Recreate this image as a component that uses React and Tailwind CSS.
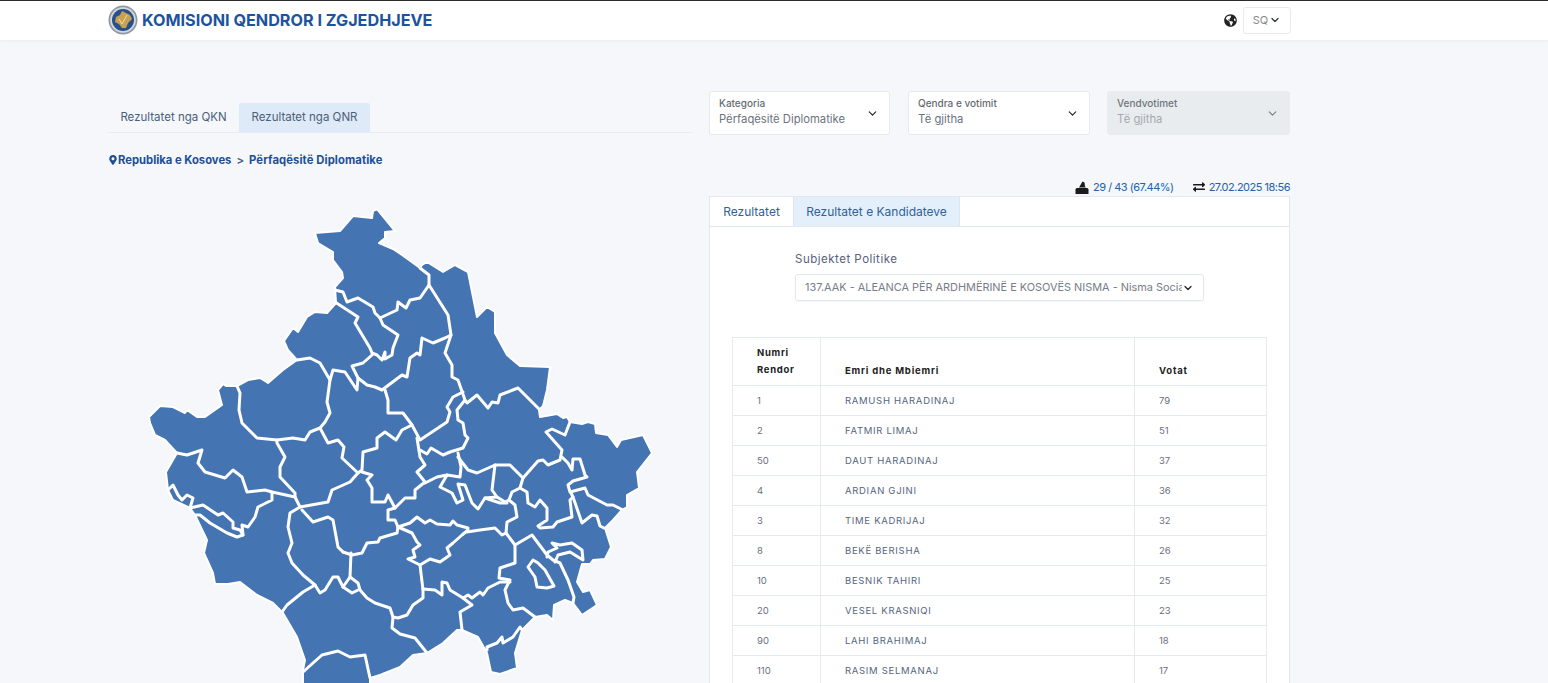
import React from "react";
import { ChevronDown } from "lucide-react";
import { FaMapMarkerAlt, FaGlobeAmericas, FaExchangeAlt } from "react-icons/fa";

const rows = [
  ["1", "RAMUSH HARADINAJ", "79"],
  ["2", "FATMIR LIMAJ", "51"],
  ["50", "DAUT HARADINAJ", "37"],
  ["4", "ARDIAN GJINI", "36"],
  ["3", "TIME KADRIJAJ", "32"],
  ["8", "BEKË BERISHA", "26"],
  ["10", "BESNIK TAHIRI", "25"],
  ["20", "VESEL KRASNIQI", "23"],
  ["90", "LAHI BRAHIMAJ", "18"],
  ["110", "RASIM SELMANAJ", "17"],
];

const outline =
  "315,233 340,231 353,216 372,218 373,211 377,209 395,231 385,232 385,238 379,243 393,249 402,255 420,268 422,265 427,262 443,272 455,265 468,272 477,317 487,307 495,312 495,333 507,355 520,366 550,367 547,390 543,406 539,410 540,417 557,414 563,418 567,417 570,422 582,424 588,422 595,424 596,433 608,435 617,447 621,440 643,435 652,453 637,472 639,488 627,495 627,507 622,510 613,520 605,528 611,547 605,559 593,560 590,564 582,564 577,582 583,592 590,590 597,605 582,615 573,603 565,600 554,605 553,620 547,615 535,617 522,630 515,653 517,668 500,674 491,672 487,653 478,637 462,630 457,630 443,643 427,653 413,655 400,667 380,675 370,678 370,700 303,700 303,670 305,660 297,637 283,613 273,603 257,595 240,582 228,584 215,584 213,573 204,553 207,540 195,515 190,508 173,500 168,490 166,472 177,453 165,440 155,435 150,423 149,417 160,406 173,407 185,413 187,410 197,417 205,417 222,405 218,390 223,384 226,386 237,386 248,380 260,378 268,383 283,370 297,360 288,350 284,341 293,328 298,332 307,317 315,312 327,313 336,303 335,287 343,278 342,272 333,260 333,252 318,243";

const borders = [
  "335,290 343,292 347,302 358,298 373,307 375,313 380,318 397,310 398,302 406,308 410,300 420,298 429,285 429,275 420,268",
  "429,285 448,315 451,335 445,353 452,365 452,377 458,380 465,400 467,403 477,395 488,408 492,402 498,403 500,395 518,388 539,409",
  "380,318 383,325 398,335 393,348 392,355 385,359 385,352 382,360 377,355 372,353 370,348 355,323 358,317 335,302",
  "372,355 363,363 352,366 358,378 357,390 345,372 333,370 330,380 320,363 310,358 297,360",
  "358,378 367,385 375,387 382,390 402,375 407,377 410,358 417,353 420,355 422,338 433,343 445,338 451,335",
  "385,390 388,400 388,413 403,413 412,425 420,440 447,422 450,412 447,407 453,397 463,392",
  "465,400 457,410 458,420 463,423 465,435 468,438 463,448 450,452 443,455 431,448 427,454 420,450",
  "330,380 327,402 330,413 325,422 320,428 310,432 305,440 293,438 277,440 257,438 242,423 239,410 240,393 237,386",
  "320,428 328,443 338,440 344,447 342,458 358,473 362,470 363,452 377,448 377,438 385,432 396,440 402,430 412,425",
  "362,472 372,475 367,480 372,488 372,502 385,502 388,495 395,508 405,498 415,498 415,490 425,482 417,472 425,465 420,457 417,438",
  "425,483 437,477 447,475 460,477 461,467 458,453",
  "358,473 350,482 332,490 328,502 300,507 295,497 295,493 280,477 280,467 285,457 277,443 277,440",
  "458,457 468,470 477,473 495,465 510,465 517,472 523,478 538,461 543,460 548,465 560,460 562,450 546,432 552,429 565,435 570,422",
  "562,457 568,463 572,470 573,459 580,459 585,475 587,477 573,481 568,485 570,492 585,488 588,495 607,505 613,505 623,510",
  "571,493 573,497 582,523 592,515 597,516 600,526 604,528",
  "573,497 570,500 572,517 557,522 553,527 540,528 538,526 547,520 547,508 540,500 535,507 528,503 527,492 520,488 523,478",
  "520,488 512,492 509,500 515,505 517,517 507,522 506,533 515,545 532,535 547,555 553,560 560,563 568,580 574,597 573,603",
  "495,465 492,490 497,497 505,502 509,500",
  "497,497 485,498 478,509 472,503 465,485 458,484 463,500 457,503 452,493 440,487 447,475",
  "485,498 500,503 507,503",
  "395,508 388,510 388,520 395,520 398,527 397,533 380,538 378,542 367,543 362,553 352,555 343,552",
  "398,527 410,523 417,517 425,523 430,520 437,524 450,525 453,521 457,525 468,528 467,532 480,530 495,528 502,535 506,533",
  "398,527 412,533 417,542 420,545 413,550 415,557 408,559 420,565 430,559 440,562 450,555 447,548 453,543 462,535 468,530",
  "420,565 423,590 423,598 413,605 407,615 398,618 393,617 390,608 375,603 367,598 360,590 358,583 350,577 343,587 352,593 358,590",
  "423,589 435,590 442,595 442,582 447,583 450,590 463,598 468,595 472,598 480,592 483,595 488,588 500,582 510,582",
  "463,598 472,605 460,612 462,630",
  "515,545 515,563 500,568 499,578 510,580 505,590 508,603 513,610 523,608 535,617",
  "547,557 548,552 557,548 552,543 560,545 572,543 582,550 583,560 570,552 558,555 555,562",
  "487,650 487,647 497,643 502,637 503,643 513,637 520,627 522,630",
  "393,617 392,628 400,634 415,638 427,653",
  "350,577 351,553",
  "300,507 290,513 288,527 292,543 288,553 292,563 303,575 315,585 303,592 287,605 282,612",
  "302,510 313,522 328,517 333,520 338,547 343,552",
  "315,585 320,593 325,590 333,577 338,577 343,587",
  "177,453 187,455 202,450 198,463 205,472 225,478 233,470 242,477 247,492 265,490 272,492 295,497",
  "272,492 272,500 258,507 255,517 248,527 242,525 243,535 237,537 227,533 210,523 200,515 195,515",
  "168,490 173,485 178,495 182,500 187,495 193,498 190,508 203,505 218,515 223,513 233,522 233,528 240,530 243,535",
  "303,672 313,663 322,655 338,651 350,657 365,655 370,678",
];

function KosovoMap() {
  return (
    <svg viewBox="108 200 584 490" className="block w-[584px] h-[490px]">
      <polygon points={outline} fill="#4474b2" stroke="#ffffff" strokeWidth="2" strokeLinejoin="round" />
      {borders.map((b, i) => (
        <polyline key={i} points={b} fill="none" stroke="#ffffff" strokeWidth="3" strokeLinejoin="round" strokeLinecap="round" />
      ))}
      <polygon points="533,560 528,567 535,577 537,587 547,588 554,586 545,570 538,563" fill="#4474b2" stroke="#ffffff" strokeWidth="3" strokeLinejoin="round" />
    </svg>
  );
}

function Logo() {
  return (
    <svg viewBox="0 0 30 30" className="w-[30px] h-[30px] shrink-0">
      <circle cx="15" cy="15" r="14.5" fill="#8f98a3" />
      <circle cx="15" cy="15" r="12.8" fill="#d5d9de" />
      <circle cx="15" cy="15" r="11" fill="#27508c" />
      <path d="M14 6 L18 8 L22 10 L24 14 L20 18 L18 23 L14 23 L11 19 L7 17 L8 12 L12 10 Z" fill="#c9a24f" />
      <path d="M11 14 L14 19 L19 10" fill="none" stroke="#f2e9d2" strokeWidth="0.8" />
    </svg>
  );
}

function BallotIcon() {
  return (
    <svg viewBox="0 0 14 13" className="w-[14px] h-[13px]" fill="#1b1b1b">
      <path d="M1.5 7 H12.5 L13.5 8.5 V13 H0.5 V8.5 Z" />
      <path d="M4 6.5 L7.5 0.5 L9.5 1.5 L10 5.5 L11 6.5 Z" />
    </svg>
  );
}

function Filter({ label, value, disabled, className }) {
  return (
    <div
      className={`h-11 rounded-[3px] border pl-[9px] pr-[10px] flex items-center justify-between ${className} ${
        disabled ? "bg-[#e9ecef] border-[#e9ecef]" : "bg-white border-[#e6eaf0]"
      }`}
    >
      <div>
        <div className={`text-[10px] leading-[13px] font-medium ${disabled ? "text-[#6e757c]" : "text-[#666c73]"}`}>{label}</div>
        <div className={`text-[11.25px] leading-[19px] ${disabled ? "text-[#a3a9af]" : "text-[#6b7280]"}`}>{value}</div>
      </div>
      <ChevronDown size={13} strokeWidth={2} className={disabled ? "text-[#777d84]" : "text-[#222]"} />
    </div>
  );
}

export default function App() {
  return (
    <div className="h-screen overflow-hidden bg-[#f5f7fb] font-['Inter','Liberation_Sans',sans-serif]">
      <header className="h-[40px] bg-white border-t border-t-[#2b2b2b] shadow-[0_1px_3px_rgba(0,0,0,0.05)]">
        <div className="ml-[108px] w-[1183px] h-[39px] flex items-center justify-between">
          <div className="flex items-center gap-1 -mt-[1px]">
            <Logo />
            <span className="text-[16.2px] font-bold text-[#1c539e] whitespace-nowrap">KOMISIONI QENDROR I ZGJEDHJEVE</span>
          </div>
          <div className="flex items-center gap-[6px] -mt-[1px]">
            <FaGlobeAmericas size={13} className="text-[#222]" />
            <div className="w-[48px] h-[27px] bg-white border border-[#e6eaf0] rounded-[3px] flex items-center justify-center gap-[1px] text-[11px] text-[#888]">
              SQ
              <ChevronDown size={12} strokeWidth={2.5} className="text-[#333]" />
            </div>
          </div>
        </div>
      </header>

      <main className="ml-[108px] w-[1182px] flex gap-[17px]">
        <section className="w-[584px] pt-[63px]">
          <div className="flex border-b border-[#e6ecf3] h-[30px]">
            <div className="w-[131px] pt-[1px] flex items-center justify-center text-[11.5px] text-[#4c5f7a]">Rezultatet nga QKN</div>
            <div className="w-[131px] pt-[1px] flex items-center justify-center text-[11.5px] text-[#4c5f7a] bg-[#deeaf7] rounded-t-[3px]">Rezultatet nga QNR</div>
          </div>
          <div className="mt-[19px] h-[16px] flex items-center text-[11.25px] font-bold text-[#1c4f94] whitespace-nowrap">
            <FaMapMarkerAlt size={10} />
            <span>Republika e Kosoves</span>
            <span className="mx-[5px] text-[#45618a]">&gt;</span>
            <span className="tracking-[0.1px]">Përfaqësitë Diplomatike</span>
          </div>
          <div className="mt-[32px]">
            <KosovoMap />
          </div>
        </section>

        <section className="w-[581px] pt-[51px]">
          <div className="flex">
            <Filter className="w-[181px]" label="Kategoria" value="Përfaqësitë Diplomatike" />
            <Filter className="w-[182px] ml-[18px]" label="Qendra e votimit" value="Të gjitha" />
            <Filter className="w-[183px] ml-[17px]" label="Vendvotimet" value="Të gjitha" disabled />
          </div>

          <div className="mt-[44px] h-[16px] flex items-center justify-end text-[11px] tracking-[-0.5px] text-[#2462a8] whitespace-nowrap">
            <BallotIcon />
            <span className="ml-[4px]">29 / 43 (67.44%)</span>
            <FaExchangeAlt size={12} className="ml-[19px] mr-[4px] text-[#1b1b1b]" />
            <span>27.02.2025 18:56</span>
          </div>

          <div className="mt-[1px] bg-white border border-[#e3e8ee]">
            <div className="flex h-[30px] border-b border-[#e3e8ee]">
              <div className="w-[83px] flex items-center justify-center text-[12px] text-[#2f6299]">Rezultatet</div>
              <div className="w-[167px] flex items-center justify-center text-[12px] text-[#2f6299] bg-[#e3f0fb] border-l border-r border-[#dde6ee]">Rezultatet e Kandidateve</div>
            </div>

            <div className="pl-[85px] pt-[23px] text-[11.5px] leading-[18px] text-[#58607a] tracking-[0.5px]">Subjektet Politike</div>
            <div className="ml-[85px] mt-[6px] w-[409px] h-[27px] border border-[#e3e8ee] rounded-[3px] shadow-[0_1px_2px_rgba(0,0,0,0.04)] pl-[9px] pr-[9px] flex items-center justify-between">
              <span className="w-[378px] overflow-hidden whitespace-nowrap text-[10.9px] text-[#777d88]">137.AAK - ALEANCA PËR ARDHMËRINË E KOSOVËS NISMA - Nisma Socialdemokrate</span>
              <ChevronDown size={12} strokeWidth={2.5} className="text-[#222] shrink-0" />
            </div>

            <table className="ml-[22px] mt-[36px] w-[535px] border-collapse table-fixed">
              <thead>
                <tr className="h-[48px]">
                  <th className="w-[88px] border border-[#e3ebef] pl-[24px] pb-[7px] align-bottom text-left text-[9.5px] leading-[17px] font-bold tracking-[0.7px] text-[#222]">Numri<br />Rendor</th>
                  <th className="w-[314px] border border-[#e3ebef] pl-[24px] pb-[6px] align-bottom text-left text-[9.5px] leading-[17px] font-bold tracking-[0.8px] text-[#222]">Emri dhe Mbiemri</th>
                  <th className="border border-[#e3ebef] pl-[24px] pb-[6px] align-bottom text-left text-[9.5px] leading-[17px] font-bold tracking-[0.8px] text-[#222]">Votat</th>
                </tr>
              </thead>
              <tbody>
                {rows.map((r) => (
                  <tr key={r[1]} className="h-[30px]">
                    <td className="border border-[#e3ebef] pl-[24px] pt-[1px] text-[9.5px] text-[#667080]">{r[0]}</td>
                    <td className="border border-[#e3ebef] pl-[24px] pt-[1px] text-[9.5px] tracking-[0.7px] text-[#56657e]">{r[1]}</td>
                    <td className="border border-[#e3ebef] pl-[24px] pt-[1px] text-[9.5px] text-[#667080]">{r[2]}</td>
                  </tr>
                ))}
              </tbody>
            </table>
          </div>
        </section>
      </main>
    </div>
  );
}
